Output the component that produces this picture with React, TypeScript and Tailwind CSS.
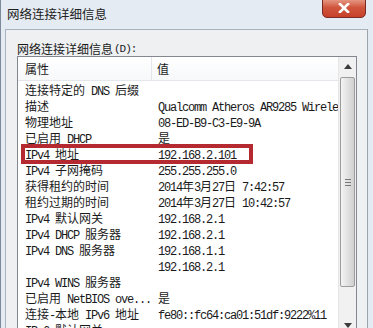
import type { ReactNode } from 'react';

const rows: [string, string][] = [
  ['连接特定的 DNS 后缀', ''],
  ['描述', 'Qualcomm Atheros AR9285 Wireless Network Adapter'],
  ['物理地址', '08-ED-B9-C3-E9-9A'],
  ['已启用 DHCP', '是'],
  ['IPv4 地址', '192.168.2.101'],
  ['IPv4 子网掩码', '255.255.255.0'],
  ['获得租约的时间', '2014年3月27日 7:42:57'],
  ['租约过期的时间', '2014年3月27日 10:42:57'],
  ['IPv4 默认网关', '192.168.2.1'],
  ['IPv4 DHCP 服务器', '192.168.2.1'],
  ['IPv4 DNS 服务器', '192.168.1.1'],
  ['', '192.168.2.1'],
  ['IPv4 WINS 服务器', ''],
  ['已启用 NetBIOS ove...', '是'],
  ['连接-本地 IPv6 地址', 'fe80::fc64:ca01:51df:9222%11'],
  ['IPv6 默认网关', ''],
];

// ASCII runs get the narrow fixed-width face, CJK stays 12px
function Mixed({ s }: { s: string }) {
  const parts = s.split(/([\x20-\x7e]+)/);
  return (
    <>
      {parts.map((p, i): ReactNode =>
        /^[\x20-\x7e]+$/.test(p) ? (
          <span key={i} className="font-['Liberation_Mono',monospace] text-[12px] tracking-[-1.2px]">
            {p}
          </span>
        ) : (
          p
        )
      )}
    </>
  );
}

export default function App() {
  return (
    <div className="relative w-[373px] h-[328px] overflow-hidden bg-[#e4ebf2] border-l border-[#7d8a99] font-['Noto_Sans_CJK_SC',sans-serif] text-[12px] text-[#1a1a1a]">
      {/* Title bar */}
      <div className="h-[29px] flex items-center pl-[6px] text-[12.5px] text-[#222]">网络连接详细信息</div>
      <div className="absolute top-[-3px] right-[7px] w-[44px] h-[21px] rounded-b-[5px] border border-[#7a2a22] bg-gradient-to-b from-[#e9a493] via-[#d0553c] to-[#c7402a] flex items-center justify-center">
        <svg width="12" height="10" viewBox="0 0 12 10">
          <path d="M2 1 L10 9 M10 1 L2 9" stroke="#fff" strokeWidth="2.6" strokeLinecap="square" />
        </svg>
      </div>

      {/* Group panel */}
      <div className="ml-[4px] w-[363px] h-[320px] bg-[#eef0f2] border border-[#a9b3bd] border-r-[#9aa5b0]">
        <div className="pl-[11px] pt-[12px] h-[26px] leading-[14px] flex items-center">
          网络连接详细信息
          <span className="font-['Liberation_Mono',monospace] text-[11px] tracking-[-1px] ml-[1px]">(D):</span>
        </div>

        {/* List view */}
        <div className="relative ml-[11px] w-[340px] h-[300px] bg-white border border-[#828790] flex">
          <div className="flex-1 flex flex-col">
            <div className="h-[24px] flex border-b border-[#e3e6ea] bg-gradient-to-b from-white to-[#f7f8fa]">
              <div className="w-[134px] pl-[7px] flex items-center border-r border-[#e3e6ea]">属性</div>
              <div className="flex-1 pl-[5px] flex items-center">值</div>
            </div>
            <div className="flex flex-col pt-[1px]">
              {rows.map(([k, v], i) => (
                <div key={i} className="h-[16px] leading-[16px] flex whitespace-nowrap">
                  <div className="w-[134px] pl-[7px] overflow-hidden">
                    <Mixed s={k} />
                  </div>
                  <div className="w-[186px] pl-[6px] overflow-hidden">
                    <Mixed s={v} />
                  </div>
                </div>
              ))}
            </div>
          </div>

          {/* Scrollbar */}
          <div className="w-[18px] bg-[#f1f1f1] border-l border-[#e6e6e6] flex flex-col items-center">
            <div className="h-[17px] flex items-center justify-center mt-[1px]">
              <svg width="8" height="5" viewBox="0 0 8 5">
                <path d="M0 5 L4 0 L8 5 Z" fill="#3c3c3c" />
              </svg>
            </div>
            <div className="mt-[2px] w-[15px] h-[210px] rounded-[2px] border border-[#9c9c9c] bg-gradient-to-r from-[#f4f4f4] via-[#e2e2e2] to-[#cfcfcf] flex items-center justify-center">
              <div className="flex flex-col gap-[2px]">
                <div className="w-[6px] h-[1px] bg-[#777]" />
                <div className="w-[6px] h-[1px] bg-[#777]" />
                <div className="w-[6px] h-[1px] bg-[#777]" />
              </div>
            </div>
            <div className="mt-auto mb-[25px] h-[10px] flex items-center justify-center">
              <svg width="8" height="5" viewBox="0 0 8 5">
                <path d="M0 0 L4 5 L8 0 Z" fill="#3c3c3c" />
              </svg>
            </div>
          </div>
        </div>
      </div>

      {/* Red highlight around IPv4 address row */}
      <div className="absolute left-[20px] top-[144px] w-[232px] h-[20px] border-[4px] border-[#b52a30]" />
    </div>
  );
}
